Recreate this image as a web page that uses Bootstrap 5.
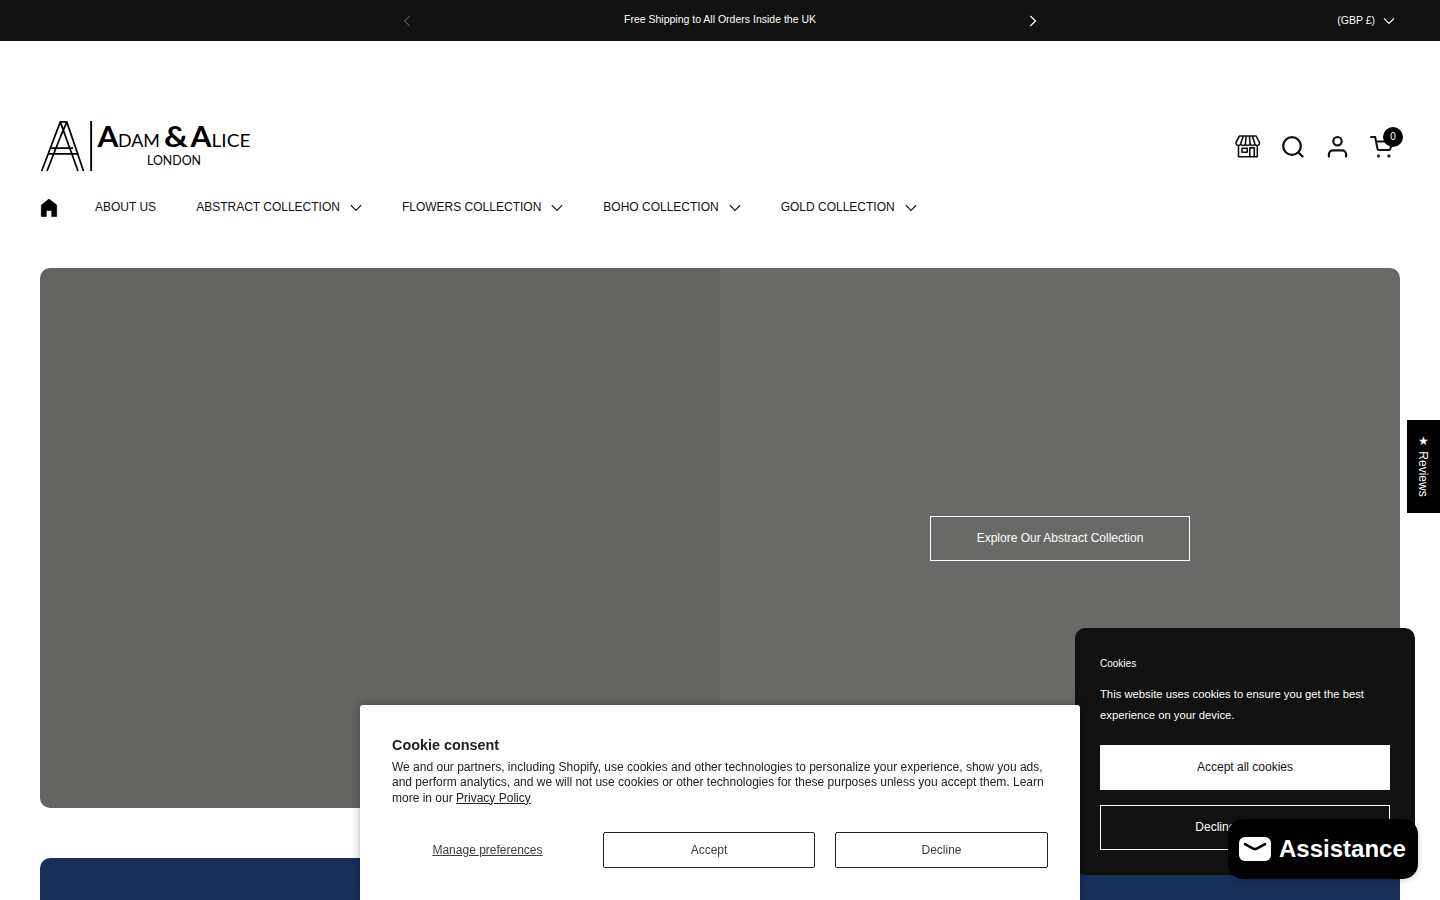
<!DOCTYPE html>
<html lang="en">
<head>
<meta charset="utf-8">
<meta name="viewport" content="width=device-width, initial-scale=1">
<title>Adam &amp; Alice London</title>
<link href="https://cdn.jsdelivr.net/npm/bootstrap@5.3.0/dist/css/bootstrap.min.css" rel="stylesheet">
<style>
body{font-family:"Liberation Sans",Arial,sans-serif;font-size:12px;line-height:18px;color:#111;height:900px;overflow:hidden}
svg{display:block;flex:none;overflow:visible}
.announce{height:41px;background:#111;color:#fff;font-size:10.5px;padding:0 45px 1px}
.announce-mid{width:634px}
.announce-mid span{padding-bottom:2px}
.announce-mid svg{margin-top:1px}
.currency{right:45px;gap:8px}
.site-head{padding:80px 40px 0;height:227px}
.head-icons{padding:13px 5px 0 0;gap:20px}
.site-nav{margin-top:25px;height:20px}
.site-nav a{color:#111;text-decoration:none;white-space:nowrap;margin-right:40px}
.site-nav a.home{margin:1px 37px 0 0}
.site-nav .drop{gap:10px}
.site-nav .drop svg,.currency svg{margin-top:2px}
.cart-count{left:13px;top:-7px;width:20px;height:20px;background:#000;color:#fff;font-size:10px;line-height:20px;text-align:center}
.hero{height:540px;border-radius:10px;margin:0 40px;overflow:hidden}
.hero-l{background:#646462}
.hero-r{background:#696967}
.btn-box{height:45px;border:1px solid #fff;border-radius:0;font-size:12px;line-height:18px;padding:0 0 2px;display:flex;align-items:center;justify-content:center}
.hero .btn-box{width:260px;padding-bottom:0}
.btn-box,.btn-box:hover{color:#fff}
.btn-box.solid{background:#fff;color:#111}
.btn-box+.btn-box{margin-top:15px}
.promo{margin:50px 40px 0;height:42px;border-radius:10px 10px 0 0;background:#182f59}
.reviews{right:0;top:420px;width:33px;height:93px;background:#000;color:#fff;writing-mode:vertical-rl;font-size:12px;line-height:32px;text-align:center;padding:0 1px 2px 0}
.cookie-card{left:1075px;top:628px;width:340px;height:247px;padding:25px;background:#111;color:#fff;border-radius:10px}
.cookie-card h6{font-size:10px;line-height:21px;font-weight:400;margin:0 0 10px}
.cookie-card p{font-size:11.25px;line-height:21px;margin:0 0 19px}
.consent{left:360px;top:705px;width:720px;height:195px;padding:32px 32px 0;border-radius:3px 3px 0 0;color:#202223;box-shadow:0 0 10px rgba(0,0,0,.3)}
.consent h2{font-size:14.4px;line-height:17px;font-weight:700;margin:0 0 5.6px}
.consent p{font-size:12px;line-height:15.6px;margin:0 0 25.6px}
.consent a{color:inherit}
.consent .acts{display:grid;grid-template-columns:191px 212px 213px;column-gap:20px}
.consent .acts>*{height:36px;font-size:12px;line-height:34px;padding:0;text-align:center;color:#3a3c3d;border-radius:2px}
.consent .acts>a{padding-top:1px}
.consent .acts .btn{border:1px solid #202223}
.assist{left:1228px;top:819px;width:190px;height:60px;border-radius:15px;background:#000;color:#fff;font-size:24px;font-weight:700;padding-left:11px;gap:8px;box-shadow:0 1px 6px rgba(0,0,0,.2)}
</style>
</head>
<body>
<div class="announce position-relative d-flex align-items-center justify-content-center">
  <div class="announce-mid d-flex align-items-center justify-content-between">
    <svg width="8" height="12" viewBox="0 0 8 12" fill="none" stroke="#777" stroke-width="1"><path d="M6.700 1 1.500 6l5.200 5"/></svg>
    <span>Free Shipping to All Orders Inside the UK</span>
    <svg width="8" height="12" viewBox="0 0 8 12" fill="none" stroke="#fff" stroke-width="1.2"><path d="m1.300 1 5.200 5-5.200 5"/></svg>
  </div>
  <div class="currency position-absolute d-flex align-items-center">
    <span>(GBP £)</span>
    <svg width="12" height="8" viewBox="0 0 12 8" fill="none" stroke="#fff" stroke-width="1.2"><path d="m1 1.300 5 5 5-5"/></svg>
  </div>
</div>

<header class="site-head">
  <div class="d-flex justify-content-between align-items-start">
    <svg width="212" height="51" viewBox="0 0 212 51" aria-label="Adam &amp; Alice London">
      <g fill="none" stroke="#000" stroke-width="1.700">
        <path d="M1.700 50 20.300.9h6.500L43.500 50M7 50 23.500 8M20.300.9 38 50M26.800.9 20.500 16M11 27.200h22M9 32.800h28"/>
      </g>
      <path d="M50.200 0h1.900v50h-1.900z"/>
      <g font-family="Lato, sans-serif" fill="#000">
        <text x="57.500" y="26" font-size="28" font-weight="700" textLength="21" lengthAdjust="spacingAndGlyphs">A</text>
        <text x="78" y="26" font-size="17" textLength="42" lengthAdjust="spacingAndGlyphs">DAM</text>
        <text x="124" y="26" font-size="29" font-weight="700" textLength="24" lengthAdjust="spacingAndGlyphs">&amp;</text>
        <text x="150.500" y="26" font-size="28" font-weight="700" textLength="21" lengthAdjust="spacingAndGlyphs">A</text>
        <text x="171.500" y="26" font-size="17" textLength="39" lengthAdjust="spacingAndGlyphs">LICE</text>
        <text x="107" y="43.700" font-size="12.500" textLength="54" lengthAdjust="spacingAndGlyphs">LONDON</text>
      </g>
    </svg>
    <div class="head-icons d-flex">
      <svg width="26" height="25" viewBox="0 0 26 25" fill="none" stroke="#111" stroke-width="1.600" stroke-linejoin="round"><path d="M4.500 2h16.600L24.500 8.500v1.200c-.5 2.400-4 2.400-4.700 0-.6 2.400-4 2.400-4.700 0-.6 2.400-4 2.400-4.700 0-.6 2.400-4 2.400-4.700 0-.6 2.400-4.200 2.400-4.700 0V8.500zM5.700 9.500 8.300 2M10.400 9.500l.8-7.500M15.100 9.500 14.400 2M19.800 9.500 17.300 2M3.500 12v10.800h18.800V12M7 14.200h5.200v4H7zM14.800 22.500v-8.600h4.500v8.600"/></svg>
      <svg width="24" height="25" viewBox="0 0 24 25" fill="none" stroke="#111" stroke-width="2.300" stroke-linecap="round"><circle cx="11" cy="12" r="8.800"/><path d="m17.500 18.500 4 4"/></svg>
      <svg width="25" height="25" viewBox="0 0 25 25" fill="none" stroke="#111" stroke-width="2.200" stroke-linecap="round"><circle cx="12.500" cy="7.200" r="4.200"/><path d="M3.900 22.500v-2.200a4 4 0 0 1 4-4h9.200a4 4 0 0 1 4 4v2.200"/></svg>
      <div class="position-relative">
        <svg width="25" height="25" viewBox="0 0 25 25" fill="none" stroke="#111" stroke-width="2"><path d="M.300 3h4.900l2.200 11.500q.2 1.400 1.600 1.400h9.800q1.400 0 1.700-1.400L22.300 7.500M6 7.500h16"/><g fill="#333" stroke="none"><circle cx="8.500" cy="22" r="1.700"/><circle cx="18.900" cy="22" r="1.700"/></g></svg>
        <span class="cart-count position-absolute rounded-circle">0</span>
      </div>
    </div>
  </div>
  <nav class="site-nav d-flex align-items-center">
    <a href="#" class="home" aria-label="Home"><svg width="18" height="20" viewBox="0 0 18 20"><path d="M9 1 16.700 7V18.500h-5V12.500H6.300v6H1.300V7z" stroke="#000" stroke-width=".6"/></svg></a>
    <a href="#">ABOUT US</a>
    <a href="#" class="drop d-flex align-items-center">ABSTRACT COLLECTION <svg width="12" height="8" viewBox="0 0 12 8" fill="none" stroke="#111" stroke-width="1.200"><path d="m.8 1.200 5.200 5.200 5.200-5.200"/></svg></a>
    <a href="#" class="drop d-flex align-items-center">FLOWERS COLLECTION <svg width="12" height="8" viewBox="0 0 12 8" fill="none" stroke="#111" stroke-width="1.200"><path d="m.8 1.200 5.200 5.200 5.200-5.200"/></svg></a>
    <a href="#" class="drop d-flex align-items-center">BOHO COLLECTION <svg width="12" height="8" viewBox="0 0 12 8" fill="none" stroke="#111" stroke-width="1.200"><path d="m.8 1.200 5.200 5.200 5.200-5.200"/></svg></a>
    <a href="#" class="drop d-flex align-items-center">GOLD COLLECTION <svg width="12" height="8" viewBox="0 0 12 8" fill="none" stroke="#111" stroke-width="1.200"><path d="m.8 1.200 5.200 5.200 5.200-5.200"/></svg></a>
  </nav>
</header>

<main>
  <section class="hero d-flex">
    <div class="hero-l w-50"></div>
    <div class="hero-r w-50 d-flex align-items-center justify-content-center">
      <a href="#" class="btn btn-box">Explore Our Abstract Collection</a>
    </div>
  </section>
  <section class="promo"></section>
</main>

<div class="reviews position-fixed">★ Reviews</div>

<aside class="cookie-card position-fixed">
  <h6>Cookies</h6>
  <p>This website uses cookies to ensure you get the best experience on your device.</p>
  <button class="btn btn-box solid w-100">Accept all cookies</button>
  <button class="btn btn-box w-100">Decline all cookies</button>
</aside>

<div class="consent position-fixed bg-white">
  <h2>Cookie consent</h2>
  <p>We and our partners, including Shopify, use cookies and other technologies to personalize your experience, show you ads, and perform analytics, and we will not use cookies or other technologies for these purposes unless you accept them. Learn more in our <a href="#">Privacy Policy</a></p>
  <div class="acts">
    <a href="#">Manage preferences</a>
    <button class="btn">Accept</button>
    <button class="btn">Decline</button>
  </div>
</div>

<div class="assist position-fixed d-flex align-items-center">
  <svg width="32" height="24" viewBox="0 0 32 24"><rect width="32" height="24" rx="6" fill="#fff"/><path d="m6 7.200 8.700 4.600q1.300.6 2.600 0L26 7.200" fill="none" stroke="#000" stroke-width="2.600" stroke-linecap="round"/></svg>
  <span>Assistance</span>
</div>
<script src="https://cdn.jsdelivr.net/npm/bootstrap@5.3.0/dist/js/bootstrap.bundle.min.js"></script>
</body>
</html>
